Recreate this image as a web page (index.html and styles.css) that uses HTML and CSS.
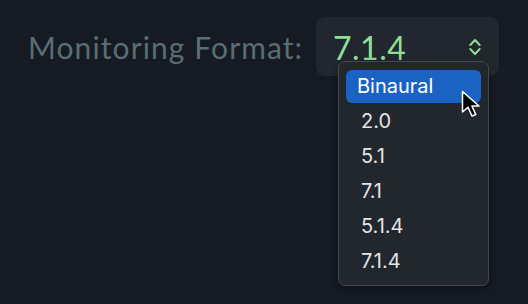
FILE: index.html
```html
<!DOCTYPE html>
<html>
<head>
<meta charset="utf-8">
<link rel="stylesheet" href="styles.css">
</head>
<body>
<div class="row">
  <div class="label">Monitoring Format:</div>
  <div class="select">
    <span class="value">7.1.4</span>
    <svg class="chev" width="12" height="18" viewBox="0 0 12 18">
      <polyline points="1.3,7 6,2 10.7,7" fill="none" stroke="#8fdf95" stroke-width="1.9" stroke-linecap="round" stroke-linejoin="round"/>
      <polyline points="1.3,11 6,16 10.7,11" fill="none" stroke="#8fdf95" stroke-width="1.9" stroke-linecap="round" stroke-linejoin="round"/>
    </svg>
    <div class="menu">
      <div class="item selected"><span>Binaural</span></div>
      <div class="item"><span>2.0</span></div>
      <div class="item"><span>5.1</span></div>
      <div class="item"><span>7.1</span></div>
      <div class="item"><span>5.1.4</span></div>
      <div class="item"><span>7.1.4</span></div>
    </div>
    <svg class="cursor" width="24" height="30" viewBox="0 0 24 30">
      <path d="M1.5,1.5 L1.5,22 L7,17.3 L11,26 L14.8,24.5 L10.9,16 L18,16 Z" fill="#000" stroke="#fff" stroke-width="1.5" stroke-linejoin="round"/>
    </svg>
  </div>
</div>
</body>
</html>
```
FILE: styles.css
```css
html, body {
  margin: 0;
  padding: 0;
  background: #151a23;
  width: 528px;
  height: 304px;
  overflow: hidden;
}
.row {
  display: flex;
  align-items: center;
  padding: 17px 0 0 28px;
  gap: 16px;
}
.label {
  font-family: Lato, "Open Sans", sans-serif;
  font-size: 30px;
  letter-spacing: 1.1px;
  color: #5a6d73;
  white-space: nowrap;
  width: 272px;
}
.select {
  position: relative;
  width: 183px;
  height: 59px;
  box-sizing: border-box;
  background: #22272f;
  border-radius: 9px;
  display: flex;
  align-items: center;
  justify-content: space-between;
  padding: 0 18px 0 17px;
}
.value {
  font-family: Lato, "Open Sans", sans-serif;
  font-size: 32px;
  letter-spacing: 0.5px;
  color: #8fdf95;
  margin-top: 2px;
}
.chev {
  display: block;
  margin-top: 1px;
}
.menu {
  position: absolute;
  left: 22px;
  top: 44px;
  width: 151px;
  height: 225px;
  box-sizing: border-box;
  background: #22262d;
  border: 1px solid #44474d;
  border-radius: 7px;
  padding: 7px;
  display: flex;
  flex-direction: column;
  box-shadow: 0 2px 6px rgba(0,0,0,0.4);
}
.item {
  height: 35px;
  display: flex;
  align-items: center;
  font-family: Inter, "Noto Sans", sans-serif;
  font-size: 20px;
  color: #e4e4e4;
  padding-left: 15px;
  box-sizing: border-box;
}
.item.selected {
  background: #1b63c3;
  color: #ffffff;
  border-radius: 6px;
  height: 33px;
  margin: 1px 0;
  padding-left: 11px;
}
.cursor {
  position: absolute;
  left: 145px;
  top: 73px;
}
```
